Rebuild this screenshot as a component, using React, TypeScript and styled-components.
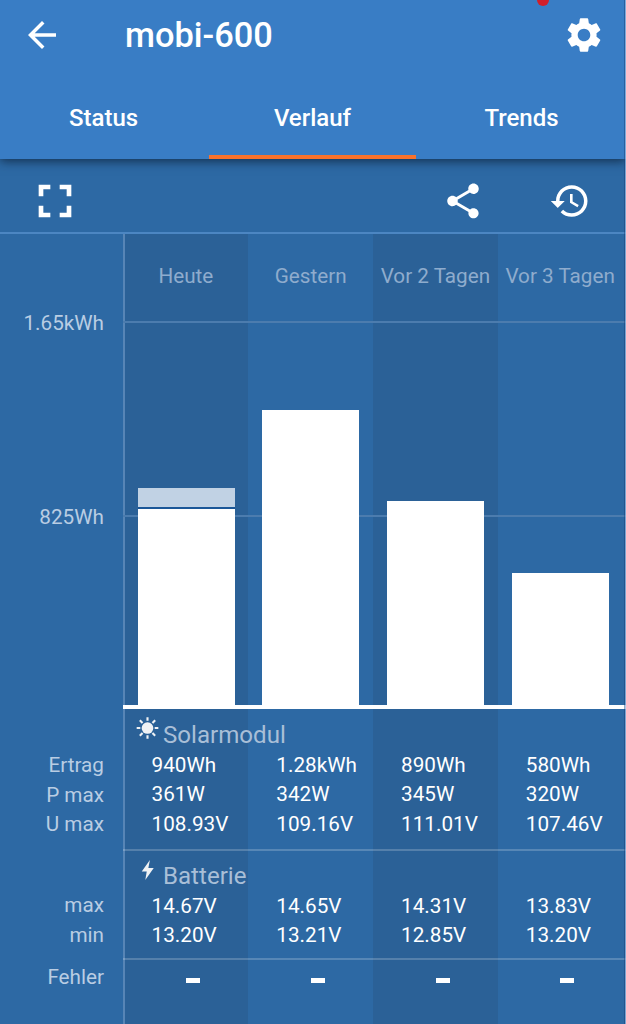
import React from "react";
import styled, { createGlobalStyle } from "styled-components";

const Global = createGlobalStyle`
  * { box-sizing: border-box; }
  body { margin: 0; background: #2d69a4; font-family: Roboto, "Liberation Sans", sans-serif; color: #fff; }
`;

const Screen = styled.div`
  position: relative;
  display: flex;
  flex-direction: column;
  width: 626px;
  height: 1024px;
  overflow: hidden;
  background: #2d69a4;
`;

const EdgeShade = styled.div`
  position: absolute;
  z-index: 2;
  top: 0;
  right: 0;
  width: 2px;
  height: 100%;
  background: linear-gradient(90deg, rgba(20, 60, 115, 0.45) 50%, rgba(150, 185, 225, 0.75) 50%);
`;

const RecordingDot = styled.div`
  position: absolute;
  z-index: 2;
  top: -6px;
  left: 537px;
  width: 12px;
  height: 12px;
  border-radius: 50%;
  background: #d11f2a;
`;

const Header = styled.header`
  display: flex;
  flex-direction: column;
  flex: none;
  height: 159px;
  background: #397dc5;
  box-shadow: 0 2px 10px rgba(10, 25, 45, 0.75);
  z-index: 1;
`;

const TitleBar = styled.div`
  display: flex;
  align-items: center;
  height: 70px;
  padding: 0 21px;
`;

const Title = styled.h1`
  flex: 1;
  margin: 0 0 0 62px;
  font-size: 34.4px;
  font-weight: 500;
  line-height: 40px;
`;

const Tabs = styled.nav`
  display: grid;
  grid-template-columns: 209px 207px 210px;
  flex: 1;
`;

const Tab = styled.div<{ $active?: boolean }>`
  display: flex;
  align-items: center;
  justify-content: center;
  padding-top: 11px;
  font-size: 24px;
  font-weight: 500;
  border-bottom: 4px solid ${(p) => (p.$active ? "#f9722b" : "transparent")};
  &:first-child { padding-right: 2px; }
  &:last-child { padding-left: 1px; }
`;

const Toolbar = styled.div`
  display: flex;
  align-items: center;
  flex: none;
  height: 75px;
  padding: 10px 35px 0 27px;
  border-bottom: 2px solid #4c86c2;
`;

const ToolbarActions = styled.div`
  display: flex;
  gap: 65px;
  margin-left: auto;
`;

const Icon = styled.svg<{ $size: number }>`
  display: block;
  flex: none;
  width: ${(p) => p.$size}px;
  height: ${(p) => p.$size}px;
  fill: currentColor;
`;

const Row = styled.section<{ $height: number }>`
  display: grid;
  grid-template-columns: 123px 1fr;
  flex: none;
  height: ${(p) => p.$height}px;
`;

const Data = styled.div<{ $line?: boolean }>`
  display: flex;
  flex-direction: column;
  border-left: 2px solid #5785b6;
  background: linear-gradient(90deg, #2b6197 123px, #2d69a4 123px, #2d69a4 248px, #2b6197 248px, #2b6197 373px, #2d69a4 373px);
  &::after {
    content: "";
    display: ${(p) => (p.$line ? "block" : "none")};
    margin: auto 0 0 -2px;
    height: 2px;
    background: rgba(255, 255, 255, 0.2);
  }
`;

const Columns = styled.div`
  display: grid;
  grid-template-columns: repeat(4, 124.75px);
`;

const Labels = styled.div<{ $top: number }>`
  padding: ${(p) => p.$top}px 19px 0 0;
  text-align: right;
  font-size: 20.7px;
  line-height: 29.5px;
  color: #b9cde3;
`;

const ScaleLabels = styled(Labels)`
  display: flex;
  flex-direction: column;
  gap: 164.5px;
`;

const DayNames = styled(Columns)`
  margin-left: -1.5px;
`;

const Day = styled.div`
  padding-top: 27px;
  text-align: center;
  font-size: 20.7px;
  line-height: 30px;
  height: 87px;
  white-space: nowrap;
  color: #8faccd;
`;

const Plot = styled(Columns)`
  flex: 1;
  align-items: end;
  margin-left: -2px;
  padding-left: 2px;
  border-bottom: 4px solid #fff;
  background:
    linear-gradient(#4c7cae, #4c7cae) 0 0 / 100% 2px no-repeat,
    linear-gradient(#4c7cae, #4c7cae) 0 194px / 100% 2px no-repeat;
`;

const Bar = styled.div<{ $height: number }>`
  width: 97px;
  height: ${(p) => p.$height}px;
  margin-left: 12.7px;
  background: #fff;
`;

const Remainder = styled.div`
  height: 21px;
  background: #c1d2e4;
  border-bottom: 2px solid #1b5798;
`;

const SectionTitle = styled.div<{ $top: number }>`
  display: flex;
  align-items: flex-start;
  gap: 4px;
  margin-top: ${(p) => p.$top}px;
  height: 34px;
  padding-left: 11px;
  font-size: 24.1px;
  line-height: 36px;
  color: #a9bfd7;
  svg { color: #f0f2f4; }
`;

const Value = styled.div`
  padding-left: 26.6px;
  font-size: 20.7px;
  line-height: 29.3px;
  white-space: nowrap;
`;

const Dash = styled.div`
  width: 14px;
  height: 5px;
  margin: 18px 0 0 61px;
  background: #fff;
`;

const days = [
  { name: "Heute", bar: 217, rest: true, solar: ["940Wh", "361W", "108.93V"], battery: ["14.67V", "13.20V"] },
  { name: "Gestern", bar: 295, solar: ["1.28kWh", "342W", "109.16V"], battery: ["14.65V", "13.21V"] },
  { name: "Vor 2 Tagen", bar: 204, solar: ["890Wh", "345W", "111.01V"], battery: ["14.31V", "12.85V"] },
  { name: "Vor 3 Tagen", bar: 132, solar: ["580Wh", "320W", "107.46V"], battery: ["13.83V", "13.20V"] },
];

function Values({ group }: { group: "solar" | "battery" }) {
  return (
    <Columns>
      {days.map((d) => (
        <div key={d.name}>
          {d[group].map((v) => <Value key={v}>{v}</Value>)}
        </div>
      ))}
    </Columns>
  );
}

export default function App() {
  return (
    <Screen>
      <Global />
      <Header>
        <TitleBar>
          <Icon $size={42} viewBox="0 0 24 24">
            <path d="M20 11H7.83l5.59-5.59L12 4l-8 8 8 8 1.41-1.41L7.83 13H20v-2z" />
          </Icon>
          <Title>mobi-600</Title>
          <Icon $size={42} viewBox="0 0 24 24">
            <path d="M19.14 12.94c.04-.3.06-.61.06-.94 0-.32-.02-.64-.07-.94l2.03-1.58c.18-.14.23-.41.12-.61l-1.92-3.32c-.12-.22-.37-.29-.59-.22l-2.39.96c-.5-.38-1.03-.7-1.62-.94l-.36-2.54c-.04-.24-.24-.41-.48-.41h-3.84c-.24 0-.43.17-.47.41l-.36 2.54c-.59.24-1.13.57-1.62.94l-2.39-.96c-.22-.08-.47 0-.59.22L2.74 8.87c-.12.21-.08.47.12.61l2.03 1.58c-.05.3-.09.63-.09.94s.02.64.07.94l-2.03 1.58c-.18.14-.23.41-.12.61l1.92 3.32c.12.22.37.29.59.22l2.39-.96c.5.38 1.03.7 1.62.94l.36 2.54c.05.24.24.41.48.41h3.84c.24 0 .44-.17.47-.41l.36-2.54c.59-.24 1.13-.56 1.62-.94l2.39.96c.22.08.47 0 .59-.22l1.92-3.32c.12-.22.07-.47-.12-.61l-2.01-1.58zM12 15.6c-1.98 0-3.6-1.62-3.6-3.6s1.62-3.6 3.6-3.6 3.6 1.62 3.6 3.6-1.62 3.6-3.6 3.6z" />
          </Icon>
        </TitleBar>
        <Tabs>
          <Tab>Status</Tab>
          <Tab $active>Verlauf</Tab>
          <Tab>Trends</Tab>
        </Tabs>
      </Header>

      <Toolbar>
        <Icon $size={56} viewBox="0 0 24 24">
          <path d="M7 14H5v5h5v-2H7v-3zm-2-4h2V7h3V5H5v5zm12 7h-3v2h5v-5h-2v3zM14 5v2h3v3h2V5h-5z" />
        </Icon>
        <ToolbarActions>
          <Icon $size={42} viewBox="0 0 24 24">
            <path d="M18 16.08c-.76 0-1.44.3-1.96.77L8.91 12.7c.05-.23.09-.46.09-.7s-.04-.47-.09-.7l7.05-4.11c.54.5 1.25.81 2.04.81 1.66 0 3-1.34 3-3s-1.34-3-3-3-3 1.34-3 3c0 .24.04.47.09.7L8.04 9.81C7.5 9.31 6.79 9 6 9c-1.66 0-3 1.34-3 3s1.34 3 3 3c.79 0 1.5-.31 2.04-.81l7.12 4.16c-.05.21-.08.43-.08.65 0 1.61 1.31 2.92 2.92 2.92s2.92-1.31 2.92-2.92-1.31-2.92-2.92-2.92z" />
          </Icon>
          <Icon $size={42} viewBox="0 0 24 24">
            <path d="M13 3c-4.97 0-9 4.03-9 9H1l3.89 3.89.07.14L9 12H6c0-3.87 3.13-7 7-7s7 3.13 7 7-3.13 7-7 7c-1.93 0-3.68-.79-4.94-2.06l-1.42 1.42C8.27 19.99 10.51 21 13 21c4.97 0 9-4.03 9-9s-4.03-9-9-9zm-1 5v5l4.28 2.54.72-1.21-3.5-2.08V8H12z" />
          </Icon>
        </ToolbarActions>
      </Toolbar>

      <Row $height={475}>
        <ScaleLabels $top={75}>
          <div>1.65kWh</div>
          <div>825Wh</div>
        </ScaleLabels>
        <Data>
          <DayNames>{days.map((d) => <Day key={d.name}>{d.name}</Day>)}</DayNames>
          <Plot>
            {days.map((d) => (
              <Bar key={d.name} $height={d.bar}>{d.rest && <Remainder />}</Bar>
            ))}
          </Plot>
        </Data>
      </Row>

      <Row $height={142}>
        <Labels $top={42}>
          <div>Ertrag</div>
          <div>P max</div>
          <div>U max</div>
        </Labels>
        <Data $line>
          <SectionTitle $top={8}>
            <Icon $size={23} viewBox="0 0 24 24">
              <circle cx="12" cy="11.5" r="6.1" />
              <path d="M12 .2v3.800M12 19v3.800M.7 11.500h3.800M19.500 11.500h3.800M4 3.500l2.800 2.800M17.200 16.700l2.800 2.800M20 3.500l-2.800 2.800M6.800 16.700l-2.800 2.800" stroke="currentColor" strokeWidth="2.200" />
            </Icon>
            Solarmodul
          </SectionTitle>
          <Values group="solar" />
        </Data>
      </Row>

      <Row $height={109}>
        <Labels $top={40}>
          <div>max</div>
          <div>min</div>
        </Labels>
        <Data $line>
          <SectionTitle $top={7}>
            <Icon $size={23} viewBox="0 0 24 24">
              <path d="M14.500 2L6 14.200h5.200L9.700 23l8.800-12.600h-5.600z" />
            </Icon>
            Batterie
          </SectionTitle>
          <Values group="battery" />
        </Data>
      </Row>

      <Row $height={64}>
        <Labels $top={2.5}>Fehler</Labels>
        <Data>
          <Columns>{days.map((d) => <Dash key={d.name} />)}</Columns>
        </Data>
      </Row>
      <RecordingDot />
      <EdgeShade />
    </Screen>
  );
}
